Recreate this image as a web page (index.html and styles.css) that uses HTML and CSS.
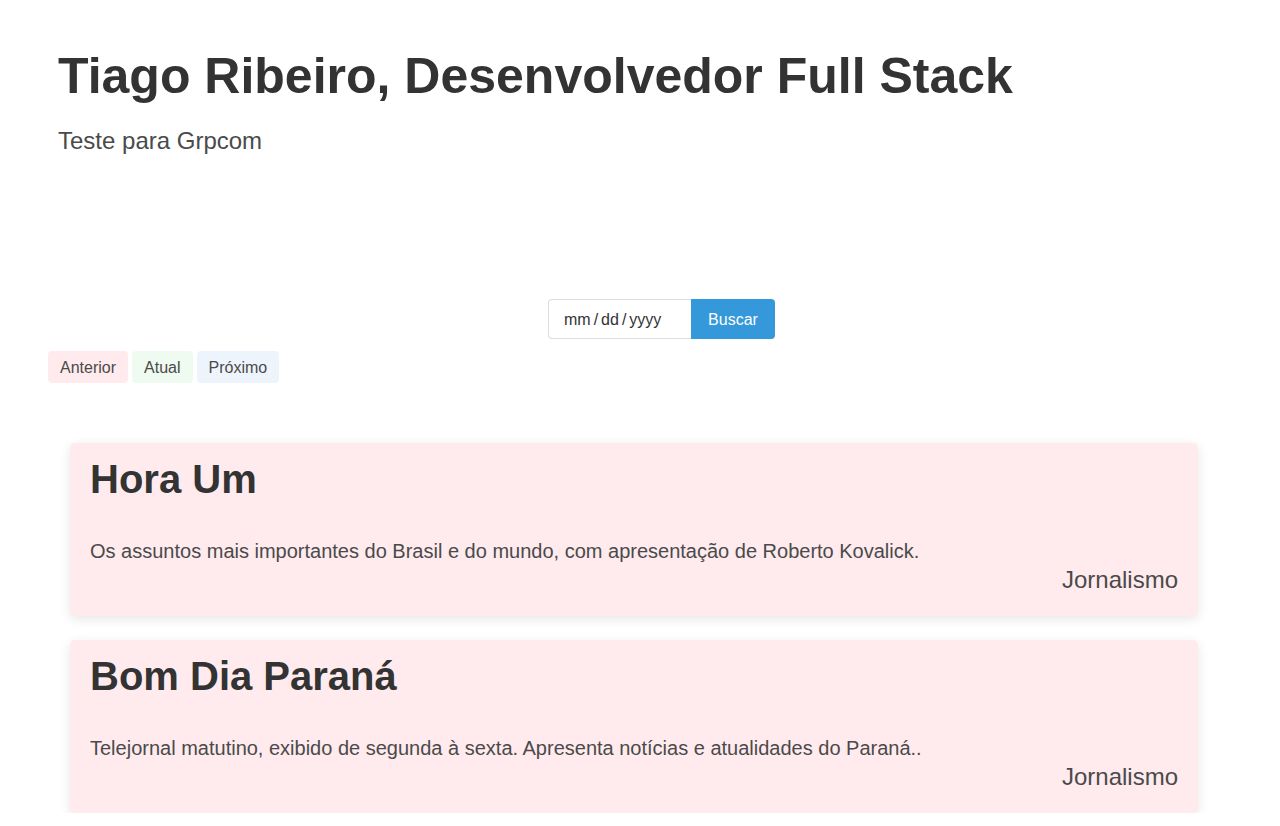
FILE: index.html
```html
<!DOCTYPE html>
<html lang="pt-BR">
<head>
<meta charset="utf-8">
<title>Tiago Ribeiro</title>
<link rel="stylesheet" href="styles.css">
</head>
<body>
<header class="hero">
  <h1 class="hero-title">Tiago Ribeiro, Desenvolvedor Full Stack</h1>
  <p class="hero-lead">Teste para Grpcom</p>
</header>
<main class="page">
  <form class="search">
    <div class="date-field">mm<span class="sep">/</span>dd<span class="sep">/</span>yyyy</div>
    <button type="button" class="btn">Buscar</button>
  </form>
  <div class="tabs">
    <span class="tab tab-prev">Anterior</span>
    <span class="tab tab-now">Atual</span>
    <span class="tab tab-next">Próximo</span>
  </div>
  <section class="list">
    <article class="card">
      <h2 class="card-title">Hora Um</h2>
      <p class="card-text">Os assuntos mais importantes do Brasil e do mundo, com apresentação de Roberto Kovalick.</p>
      <p class="card-genre">Jornalismo</p>
    </article>
    <article class="card">
      <h2 class="card-title">Bom Dia Paraná</h2>
      <p class="card-text">Telejornal matutino, exibido de segunda à sexta. Apresenta notícias e atualidades do Paraná..</p>
      <p class="card-genre">Jornalismo</p>
    </article>
  </section>
</main>
</body>
</html>
```
FILE: styles.css
```css
* { box-sizing: border-box; }
html, body { margin: 0; padding: 0; background: #fff; }
body {
  font-family: "Liberation Sans", Arial, sans-serif;
  color: #333;
  overflow: hidden;
}
.hero { padding: 46px 58px 0; height: 299px; }
.hero-title {
  margin: 0;
  font-size: 50px;
  line-height: 1.2;
  font-weight: 700;
  color: #333;
}
.hero-lead {
  margin: 21px 0 0;
  font-size: 24px;
  line-height: 1.2;
  color: #4a4a4a;
}
.page { padding: 0 48px; }
.search {
  display: flex;
  justify-content: center;
  margin: 0 0 12px 0;
  padding-left: 43px;
}
.date-field {
  width: 143px;
  height: 40px;
  border: 1px solid #ddd;
  border-right: none;
  border-radius: 4px 0 0 4px;
  padding: 2px 15px 0;
  display: flex;
  align-items: center;
  font-size: 16px;
  color: #333;
}
.sep { margin: 0 3px; }
.btn {
  width: 84px;
  height: 40px;
  border: none;
  border-radius: 0 4px 4px 0;
  background: #3498db;
  color: #fff;
  font-family: inherit;
  font-size: 16px;
  padding: 2px 0 0;
}
.tabs { display: flex; gap: 4px; }
.tab {
  display: inline-flex;
  align-items: center;
  height: 32px;
  padding: 2px 12px 0;
  border-radius: 4px;
  font-size: 16px;
  color: #4a4a4a;
}
.tab-prev { background: #ffebee; }
.tab-now { background: #effaf1; }
.tab-next { background: #eef4fb; }
.list {
  margin: 60px 34px 0 22px;
  display: flex;
  flex-direction: column;
  gap: 24px;
}
.card {
  background: #ffebee;
  border-radius: 5px;
  box-shadow: 0 3px 12px rgba(0,0,0,0.1);
  padding: 12px 20px 20px;
  height: 173px;
}
.card-title {
  margin: 0;
  font-size: 40px;
  line-height: 1.2;
  font-weight: 700;
  color: #333;
}
.card-text {
  margin: 36px 0 0;
  font-size: 20px;
  line-height: 1.2;
  color: #4a4a4a;
}
.card-genre {
  margin: 3px 0 0;
  text-align: right;
  font-size: 24px;
  line-height: 1.2;
  color: #4a4a4a;
}
```
